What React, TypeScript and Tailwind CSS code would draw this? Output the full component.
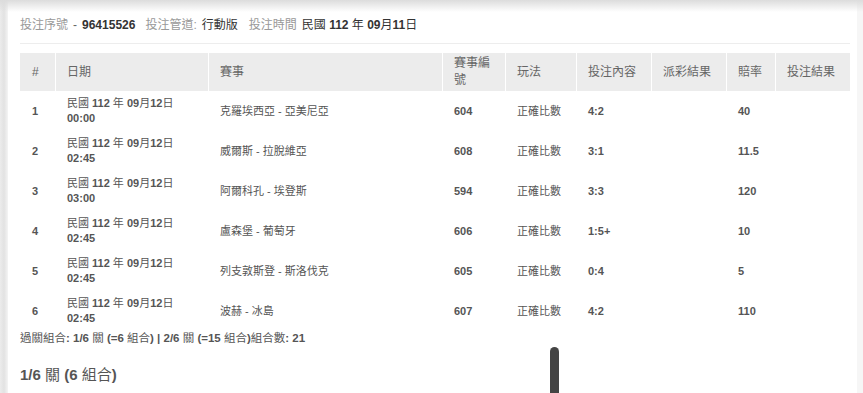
import React from "react";

type Row = {
    no: number;
    date: string;
    time: string;
    match: string;
    code: string;
    play: string;
    pick: string;
    payout: string;
    odds: string;
    result: string;
};

const rows: Row[] = [
    { no: 1, date: "民國 112 年 09月12日", time: "00:00", match: "克羅埃西亞 - 亞美尼亞", code: "604", play: "正確比數", pick: "4:2", payout: "", odds: "40", result: "" },
    { no: 2, date: "民國 112 年 09月12日", time: "02:45", match: "威爾斯 - 拉脫維亞", code: "608", play: "正確比數", pick: "3:1", payout: "", odds: "11.5", result: "" },
    { no: 3, date: "民國 112 年 09月12日", time: "03:00", match: "阿爾科孔 - 埃登斯", code: "594", play: "正確比數", pick: "3:3", payout: "", odds: "120", result: "" },
    { no: 4, date: "民國 112 年 09月12日", time: "02:45", match: "盧森堡 - 葡萄牙", code: "606", play: "正確比數", pick: "1:5+", payout: "", odds: "10", result: "" },
    { no: 5, date: "民國 112 年 09月12日", time: "02:45", match: "列支敦斯登 - 斯洛伐克", code: "605", play: "正確比數", pick: "0:4", payout: "", odds: "5", result: "" },
    { no: 6, date: "民國 112 年 09月12日", time: "02:45", match: "波赫 - 冰島", code: "607", play: "正確比數", pick: "4:2", payout: "", odds: "110", result: "" },
];

const headers = ["#", "日期", "賽事", "賽事編號", "玩法", "投注內容", "派彩結果", "賠率", "投注結果"];

const cols = "grid grid-cols-[35px_153px_234px_63px_71px_75px_75px_49px_75px]";
const font = { fontFamily: '"Liberation Sans", "Noto Sans CJK TC", sans-serif' };

// bold latin, but the chinese glyphs stay regular like in the original page
function Mixed({ text }: { text: string }) {
    const parts = text.split(/([\u3000-\u9fff\uff00-\uffef]+)/);
    return (
        <>
            {parts.map((p, i) =>
                /[\u3000-\u9fff\uff00-\uffef]/.test(p)
                    ? <span key={i} className="font-normal">{p}</span>
                    : <span key={i}>{p}</span>
            )}
        </>
    );
}

export default function App() {
    return (
        <div className="relative w-[863px] h-[393px] overflow-hidden bg-white flex" style={font}>
            {/* left shadow of the dialog */}
            <div className="w-[8px] shrink-0 bg-gradient-to-r from-[#ececec] via-[#e2e2e2] to-[#f4f4f4]"></div>

            <div className="flex-1 pl-[12px] pr-[7px] pt-[17px] bg-white">
                <div className="text-[12px] leading-[16px] flex items-baseline pb-[10px] border-b border-[#ededed]">
                    <span className="text-[#999]">投注序號</span>
                    <span className="text-[#666] mx-[5px]">-</span>
                    <span className="text-[#333] font-bold">96415526</span>
                    <span className="text-[#999] ml-[10px]">投注管道:</span>
                    <span className="text-[#333] ml-[5px]">行動版</span>
                    <span className="text-[#999] ml-[11px]">投注時間</span>
                    <span className="text-[#333] ml-[5px] font-bold"><Mixed text="民國 112 年 09月11日" /></span>
                </div>

                <div className="mt-[9px]">
                    <div className={`${cols} h-[38px] bg-[#ececec] text-[12px] leading-[17px] text-[#666]`}>
                        {headers.map((h, i) => (
                            <div key={h} className={`flex items-center pl-[11px] pr-[6px] ${i === 0 ? "pl-[12px]" : "border-l border-white"}`}>
                                {h}
                            </div>
                        ))}
                    </div>
                    {rows.map(r => (
                        <div key={r.no} className={`${cols} h-[40px] text-[11px] text-[#555]`}>
                            <div className="flex items-center pl-[12px] font-bold">{r.no}</div>
                            <div className="flex flex-col justify-center pl-[12px] font-bold leading-[15px]">
                                <span><Mixed text={r.date} /></span>
                                <span>{r.time}</span>
                            </div>
                            <div className="flex items-center pl-[12px]">{r.match}</div>
                            <div className="flex items-center pl-[12px] font-bold">{r.code}</div>
                            <div className="flex items-center pl-[12px]">{r.play}</div>
                            <div className="flex items-center pl-[12px] font-bold">{r.pick}</div>
                            <div className="flex items-center pl-[12px] font-bold">{r.payout}</div>
                            <div className="flex items-center pl-[12px] font-bold">{r.odds}</div>
                            <div className="flex items-center pl-[12px] font-bold">{r.result}</div>
                        </div>
                    ))}
                </div>

                <p className="text-[11.5px] leading-[15px] font-bold text-[#555]">
                    <Mixed text="過關組合: 1/6 關 (=6 組合) | 2/6 關 (=15 組合)組合數: 21" />
                </p>
                <h3 className="mt-[19px] text-[15px] leading-[20px] font-bold text-[#555]">
                    <Mixed text="1/6 關 (6 組合)" />
                </h3>
            </div>

            <div className="w-[6px] shrink-0 bg-[#f6f6f6]"></div>

            {/* top shadow */}
            <div className="absolute top-0 left-0 right-0 h-[12px] bg-gradient-to-b from-[#dcdcdc] to-transparent pointer-events-none"></div>
            {/* scrollbar thumb */}
            <div className="absolute left-[550px] top-[347px] w-[9px] h-[70px] rounded-full bg-[#444]"></div>
        </div>
    );
}
